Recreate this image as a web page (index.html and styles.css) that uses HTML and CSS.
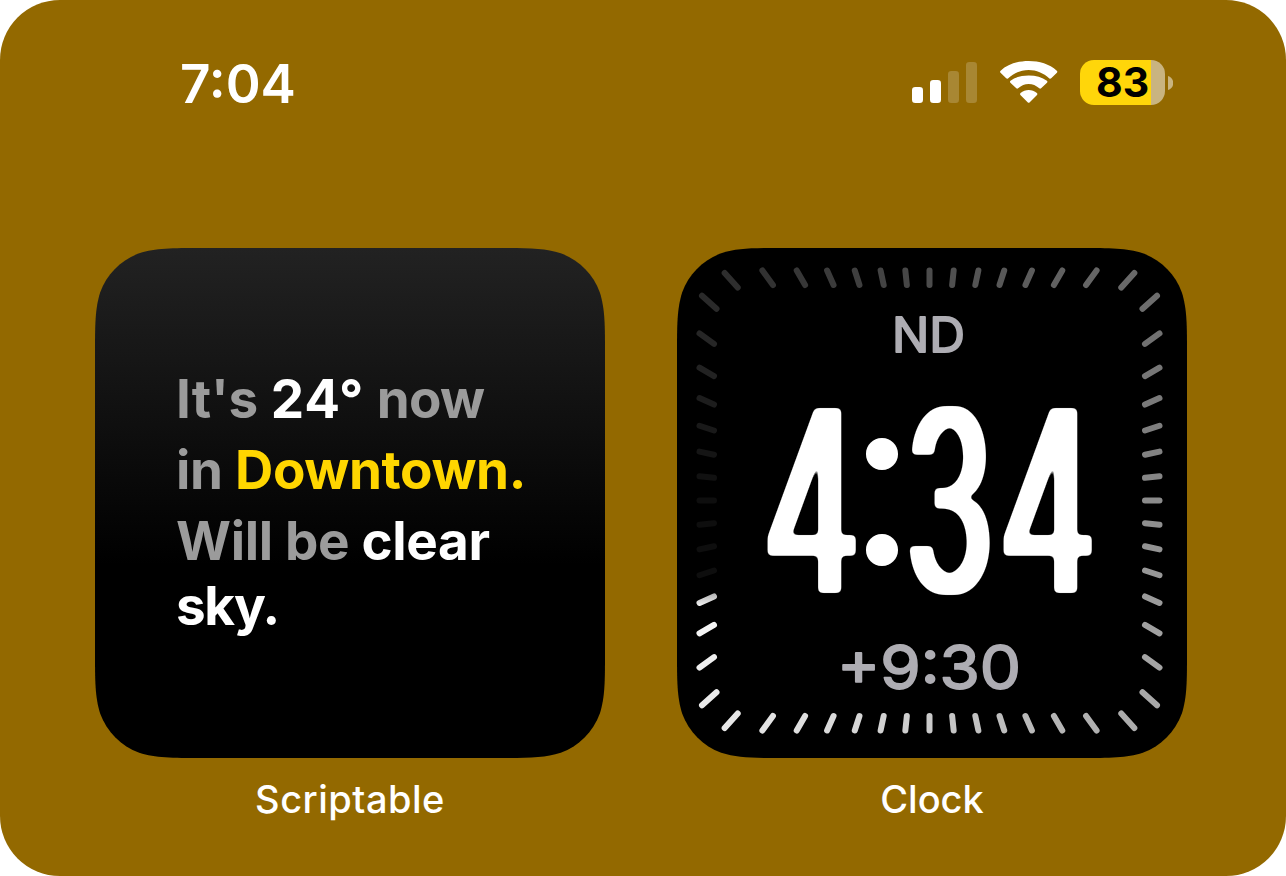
FILE: index.html
```html
<!DOCTYPE html>
<html lang="en">
<head>
<meta charset="utf-8">
<title>Home Screen</title>
<link rel="stylesheet" href="styles.css">
</head>
<body>
<main class="screen">
  <header class="status">
    <time class="status-time">7:04</time>
    <div class="status-icons">
      <svg class="signal" width="65" height="41" viewBox="0 0 65 41" fill="#fff">
        <rect x="0" y="25" width="11" height="16" rx="3.3"/>
        <rect x="18" y="18" width="11" height="23" rx="3.3"/>
        <rect x="36" y="9" width="11" height="32" rx="3.3" opacity=".2"/>
        <rect x="54" y="0" width="11" height="41" rx="3.3" opacity=".2"/>
      </svg>
      <svg class="wifi" width="58" height="42" viewBox="0 0 58 42" fill="#fff">
        <path d="M28.7 8.9C36.4 8.9 43.4 11.9 49.4 17.4Q50.3 18.2 51.2 17.300L56.900 11.700Q57.800 10.700 56.800 9.700C49.400 3 39.400 0 28.700 0S8 3 .6 9.700Q-.4 10.700 .5 11.700L6.200 17.300Q7.100 18.200 8 17.400C14 11.900 21 8.900 28.700 8.900Z"/>
        <path d="M28.700 23C32.600 23 36 24.500 39.300 27.300Q40.200 28 41.100 27.200L47 21.700Q47.900 20.700 46.900 19.700C42.100 16.100 35.900 14.400 28.700 14.400S15.300 16.100 10.500 19.700Q9.500 20.700 10.400 21.700L16.300 27.200Q17.200 28 18.100 27.300C21.400 24.500 24.800 23 28.700 23Z"/>
        <path d="M27.900 41.400Q28.700 42 29.500 41.400L37 34Q37.900 33 36.900 32.100C34.500 30 31.700 28.900 28.700 28.900S22.900 30 20.500 32.100Q19.500 33 20.400 34Z"/>
      </svg>
      <div class="battery"><span class="battery-value">83</span></div>
      <svg class="battery-cap" width="5" height="14" viewBox="0 0 5 14"><path d="M0 0C7 2 7 12 0 14Z" fill="#fff" opacity=".5"/></svg>
    </div>
  </header>

  <section class="widgets">
    <figure class="widget">
      <div class="tile weather">
        <p class="line line-now">It's <b>24°</b> <span class="tight">now</span></p>
        <p class="line line-place">in <b class="place">Downtown.</b></p>
        <p class="line line-sky">Will be <b>clear</b></p>
        <p class="line line-last"><b>sky.</b></p>
      </div>
      <figcaption class="label label-wide">Scriptable</figcaption>
    </figure>
    <figure class="widget">
      <div class="tile clock">
        <svg class="face" viewBox="0 0 510 510" width="510" height="510">
          <defs>
            <linearGradient id="hand" gradientUnits="userSpaceOnUse" x1="0" y1="341" x2="0" y2="360">
              <stop offset="0" stop-color="#999"/><stop offset="1" stop-color="#fff"/>
            </linearGradient>
            <!-- Widens the stems and rounds the corners of the condensed digits -->
            <filter id="condensed" filterUnits="userSpaceOnUse" x="60" y="130" width="390" height="240" color-interpolation-filters="sRGB">
              <feMorphology operator="dilate" radius="5 0"/>
              <feGaussianBlur stdDeviation="2.6"/>
              <feComponentTransfer><feFuncR type="linear" slope="0" intercept="1"/><feFuncG type="linear" slope="0" intercept="1"/><feFuncB type="linear" slope="0" intercept="1"/><feFuncA type="linear" slope="6" intercept="-2.500"/></feComponentTransfer>
            </filter>
          </defs>
          <g id="ticks" class="ticks"></g>
          <text class="zone" x="215" y="104" font-size="48" textLength="73" lengthAdjust="spacingAndGlyphs">ND</text>
          <g class="digits" filter="url(#condensed)">
            <text transform="translate(87 345) scale(.58 1)">4</text>
            <text transform="translate(229 345) scale(.555 1)">3</text>
            <text transform="translate(323 345) scale(.58 1)">4</text>
          </g>
          <text class="colon" x="170" y="316">:</text>
          <text class="zone" x="160" y="441" font-size="61" textLength="184" lengthAdjust="spacingAndGlyphs">+9:30</text>
        </svg>
      </div>
      <figcaption class="label">Clock</figcaption>
    </figure>
  </section>
</main>
<script src="ticks.js"></script>
</body>
</html>
```
FILE: styles.css
```css
* { box-sizing: border-box; }

body {
  margin: 0;
  background: #fff;
  font-family: Inter, "Liberation Sans", sans-serif;
}

.screen {
  width: 1286px;
  height: 876px;
  border-radius: 60px;
  background: #936900;
  overflow: hidden;
}

.status {
  height: 248px;
  padding: 60px 113px 0 180px;
  display: flex;
  justify-content: space-between;
  align-items: flex-start;
  color: #fff;
}

.status-time {
  font-size: 53px;
  font-weight: 600;
  line-height: 49px;
}

.status-icons {
  display: flex;
  align-items: flex-start;
}

.signal { margin: 2px 23px 0 0; }
.wifi { margin: 1px 22px 0 0; }

.battery {
  width: 85px;
  height: 45px;
  padding-left: 16px;
  border-radius: 14px;
  background: linear-gradient(90deg, #ffd60a 71px, rgba(255, 255, 255, .5) 71px);
}

.battery-value {
  display: block;
  color: #000;
  font-size: 41px;
  font-weight: 700;
  line-height: 45px;
}

.battery-cap { margin: 16px 0 0 3px; }

.widgets {
  display: flex;
  gap: 72px;
  padding-left: 95px;
}

.widget {
  width: 510px;
  margin: 0;
}

/* Continuous-curvature corners */
.tile {
  width: 510px;
  height: 510px;
  clip-path: path("M107 0H403C433.800 0 449.200 0 465.800 5.240C483.900 11.830 498.170 26.100 504.760 44.200C510 60.800 510 76.200 510 107V403C510 433.800 510 449.200 504.760 465.800C498.170 483.900 483.900 498.170 465.800 504.760C449.200 510 433.800 510 403 510H107C76.200 510 60.800 510 44.200 504.760C26.100 498.170 11.830 483.900 5.240 465.800C0 449.200 0 433.800 0 403V107C0 76.200 0 60.800 5.240 44.200C11.830 26.100 26.100 11.830 44.200 5.240C60.800 0 76.200 0 107 0Z");
}

.weather {
  padding: 116px 0 0 81px;
  background: linear-gradient(#222 0%, #000 62%);
}

.line {
  margin: 0;
  height: 71px;
  font-size: 53px;
  font-weight: 700;
  line-height: 71px;
  color: #9b9b9b;
  white-space: nowrap;
}

.line b { color: #fff; font-weight: 700; }
.line-now b { letter-spacing: .8px; }
.line-now .tight { letter-spacing: -.8px; }
.line-place { letter-spacing: -.3px; }
.line .place { color: #ffd600; letter-spacing: -.4px; }
.line-sky { letter-spacing: -.35px; }
.line-last { height: 59px; line-height: 59px; letter-spacing: -1.4px; }

.clock { background: #000; }
.face { display: block; }

.ticks { stroke-width: 6; stroke-linecap: round; }

.zone {
  fill: #aeadb3;
  stroke: #aeadb3;
  stroke-width: 1.8;
  stroke-linejoin: round;
  font-weight: 400;
}

.digits {
  font-size: 254px;
  font-weight: 400;
  fill: #fff;
}

.colon {
  font-size: 243px;
  font-weight: 400;
  fill: #fff;
}

.label {
  padding-top: 17px;
  text-align: center;
  color: #fff;
  font-size: 38px;
  font-weight: 500;
  line-height: 48px;
}

.label-wide { letter-spacing: .5px; }
```
FILE: ticks.js
```javascript
// Sixty marks around a rounded square, fading away behind the seconds hand.
const ticks = document.getElementById("ticks");
const CENTER = 252.5;
const HAND = 246;

for (let deg = 0; deg < 360; deg += 6) {
  const rad = (deg * Math.PI) / 180;
  const sin = Math.sin(rad);
  const cos = Math.cos(rad);
  const reach = Math.max(Math.abs(sin), Math.abs(cos));
  const corner = Math.abs((deg % 90) - 45) < 4;
  const outer = (corner ? 227.5 : 230) / reach;
  const inner = (corner ? 213 : 215.5) / reach;
  const age = (deg - HAND - 6 + 360) % 360;
  const level = Math.max(14, Math.round(age * 0.7));
  const line = document.createElementNS("http://www.w3.org/2000/svg", "line");
  line.setAttribute("x1", CENTER + sin * inner);
  line.setAttribute("y1", CENTER - cos * inner);
  line.setAttribute("x2", CENTER + sin * outer);
  line.setAttribute("y2", CENTER - cos * outer);
  line.setAttribute("stroke", deg === HAND ? "url(#hand)" : `rgb(${level},${level},${level})`);
  ticks.appendChild(line);
}
```
